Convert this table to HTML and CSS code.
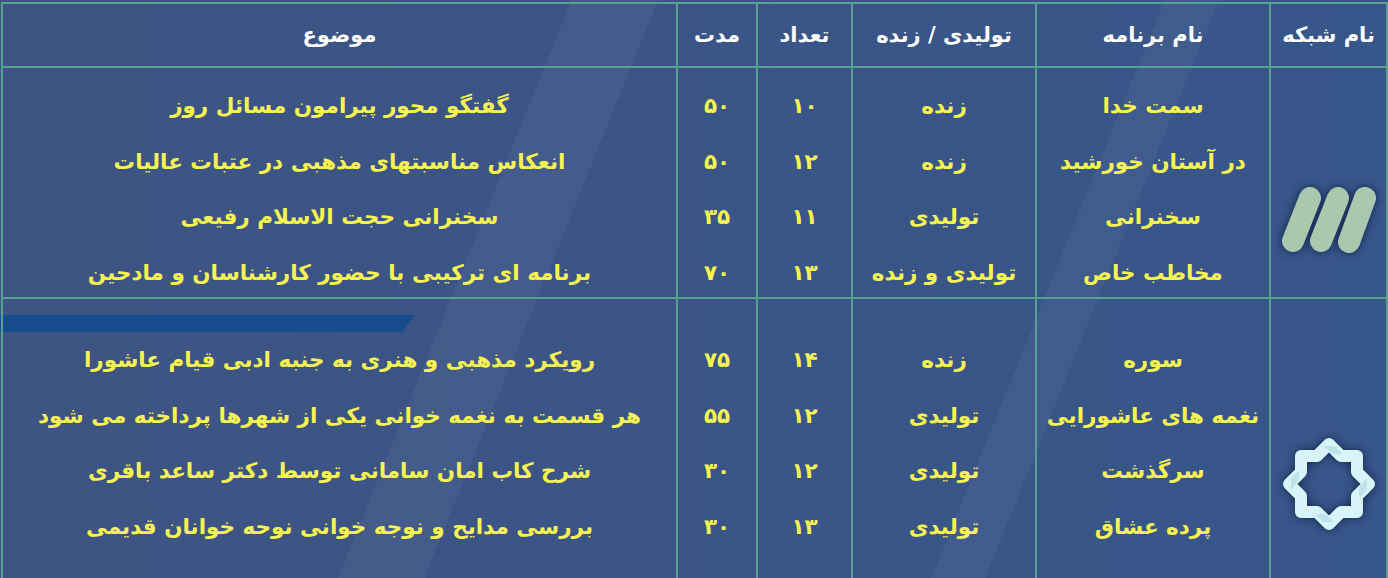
FILE: index.html
```html
<!DOCTYPE html>
<html lang="fa" dir="rtl">
<head>
<meta charset="utf-8">
<title>جدول برنامه ها</title>
<link rel="stylesheet" href="styles.css">
</head>
<body>
<div class="slide">
  <table class="grid">
    <colgroup>
      <col class="c-net">
      <col class="c-name">
      <col class="c-type">
      <col class="c-count">
      <col class="c-dur">
      <col class="c-topic">
    </colgroup>
    <thead>
      <tr class="head">
        <th>نام شبکه</th>
        <th>نام برنامه</th>
        <th>تولیدی / زنده</th>
        <th>تعداد</th>
        <th>مدت</th>
        <th>موضوع</th>
      </tr>
    </thead>
    <tbody>
      <tr class="g1">
        <td class="logo-cell">
          <svg class="logo" width="100" height="72" viewBox="0 0 100 72" aria-label="logo">
            <g stroke="#a9c8ae" stroke-width="22" stroke-linecap="round">
              <line x1="31" y1="14" x2="14" y2="57"/>
              <line x1="59" y1="14" x2="42" y2="57"/>
              <line x1="86" y1="14" x2="70" y2="58"/>
            </g>
          </svg>
        </td>
        <td><div class="ln">سمت خدا</div><div class="ln">در آستان خورشید</div><div class="ln">سخنرانی</div><div class="ln">مخاطب خاص</div></td>
        <td><div class="ln">زنده</div><div class="ln">زنده</div><div class="ln">تولیدی</div><div class="ln">تولیدی و زنده</div></td>
        <td><div class="ln">۱۰</div><div class="ln">۱۲</div><div class="ln">۱۱</div><div class="ln">۱۳</div></td>
        <td><div class="ln">۵۰</div><div class="ln">۵۰</div><div class="ln">۳۵</div><div class="ln">۷۰</div></td>
        <td><div class="ln">گفتگو محور پیرامون مسائل روز</div><div class="ln">انعکاس مناسبتهای مذهبی در عتبات عالیات</div><div class="ln">سخنرانی حجت الاسلام رفیعی</div><div class="ln">برنامه ای ترکیبی با حضور کارشناسان و مادحین</div></td>
      </tr>
      <tr class="g2">
        <td class="logo-cell">
          <svg class="logo" width="100" height="100" viewBox="-50 -50 100 100" aria-label="logo">
            <polygon points="0,-40 12,-28 28,-28 28,-12 40,0 28,12 28,28 12,28 0,40 -12,28 -28,28 -28,12 -40,0 -28,-12 -28,-28 -12,-28" fill="none" stroke="#d8f4f8" stroke-width="12" stroke-linejoin="round"/>
            <g fill="#bfe3ea">
              <path d="M-6,-38 L6,-38 L14,-30 L4,-30 Z"/>
              <path d="M38,-6 L38,6 L30,14 L30,4 Z"/>
              <path d="M6,38 L-6,38 L-14,30 L-4,30 Z"/>
              <path d="M-38,6 L-38,-6 L-30,-14 L-30,-4 Z"/>
            </g>
          </svg>
        </td>
        <td><div class="ln">سوره</div><div class="ln">نغمه های عاشورایی</div><div class="ln">سرگذشت</div><div class="ln">پرده عشاق</div></td>
        <td><div class="ln">زنده</div><div class="ln">تولیدی</div><div class="ln">تولیدی</div><div class="ln">تولیدی</div></td>
        <td><div class="ln">۱۴</div><div class="ln">۱۲</div><div class="ln">۱۲</div><div class="ln">۱۳</div></td>
        <td><div class="ln">۷۵</div><div class="ln">۵۵</div><div class="ln">۳۰</div><div class="ln">۳۰</div></td>
        <td><div class="ln">رویکرد مذهبی و هنری به جنبه ادبی قیام عاشورا</div><div class="ln">هر قسمت به نغمه خوانی یکی از شهرها پرداخته می شود</div><div class="ln">شرح کاب امان سامانی توسط دکتر ساعد باقری</div><div class="ln">بررسی مدایح و نوجه خوانی نوحه خوانان قدیمی</div></td>
      </tr>
    </tbody>
  </table>
</div>
</body>
</html>
```
FILE: styles.css
```css
html, body {
  margin: 0;
  padding: 0;
  width: 1388px;
  height: 578px;
  overflow: hidden;
}
body {
  font-family: "DejaVu Sans", sans-serif;
  background-color: #3a5586;
  background-image:
    linear-gradient(125.2deg, #174d8c 0, #174d8c 339px, transparent 339px),
    linear-gradient(90deg, #3fb4dc 0, #3fb4dc 3px, transparent 3px),
    linear-gradient(112deg, transparent 0, transparent 530px, rgba(255,255,255,0.045) 530px, rgba(255,255,255,0.045) 610px, transparent 610px),
    linear-gradient(112deg, transparent 0, transparent 1080px, rgba(255,255,255,0.04) 1080px, rgba(255,255,255,0.04) 1130px, transparent 1130px),
    linear-gradient(90deg, #3e5483 0, #37568a 100%);
  background-repeat: no-repeat;
  background-size: 415px 17px, 3px 17px, 100% 100%, 100% 100%, 100% 100%;
  background-position: 0 315px, 0 315px, 0 0, 0 0, 0 0;
}
.slide {
  padding: 2px 0 0 3px;
}
.grid {
  width: 1385px;
  table-layout: fixed;
  border-collapse: collapse;
  color: #f7f452;
  font-weight: bold;
}
.c-net { width: 117px; }
.c-name { width: 234px; }
.c-type { width: 184px; }
.c-count { width: 95px; }
.c-dur { width: 80px; }
.c-topic { width: 675px; }
.grid th, .grid td {
  border: 2px solid #58a08f;
  text-align: center;
  padding: 0;
}
.head { height: 64px; }
.grid th {
  color: #ffffff;
  font-size: 21px;
}
.grid td {
  font-size: 21.5px;
  vertical-align: top;
}
.g1 { height: 231px; }
.g2 { height: 300px; }
.g1 td { padding-top: 10px; }
.g2 td { padding-top: 33px; }
.ln {
  height: 55.7px;
  line-height: 55.7px;
  white-space: nowrap;
}
.g1 .ln:last-child { height: 44px; }
.grid td.logo-cell {
  vertical-align: top;
}
.g1 td.logo-cell { padding-top: 116px; }
.g2 td.logo-cell { padding-top: 135px; }
.logo {
  display: block;
  margin: 0 auto;
  filter: drop-shadow(0 0 5px rgba(10,25,60,0.8));
}
```
